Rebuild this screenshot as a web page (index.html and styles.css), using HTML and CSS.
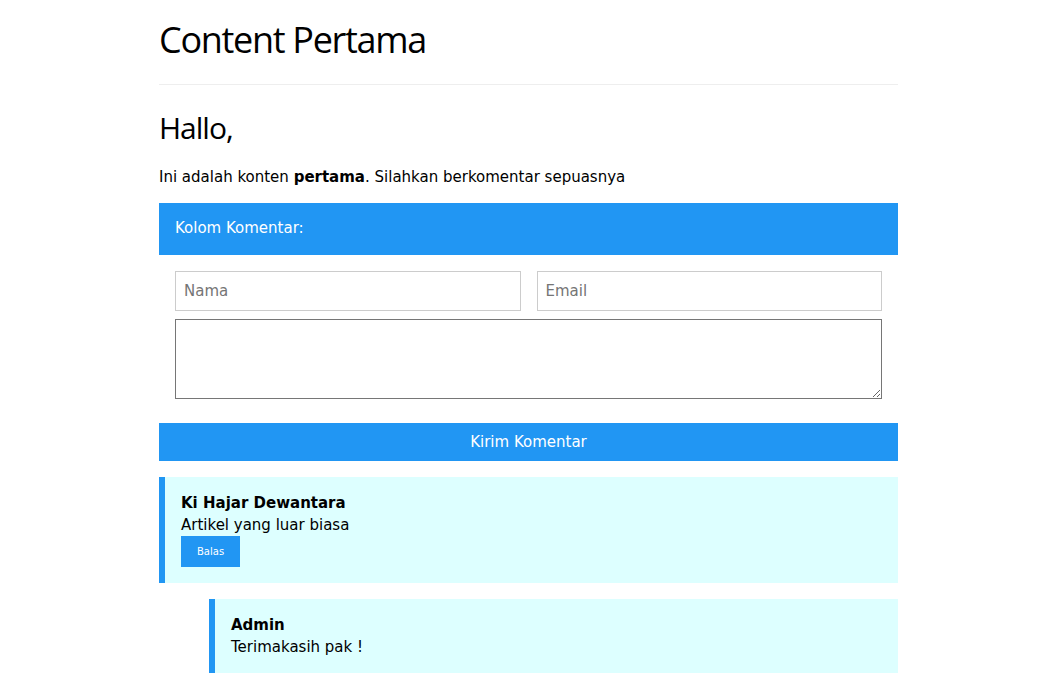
FILE: index.html
```html
<!DOCTYPE html>
<html>
<head>
<meta charset="utf-8">
<title>Content Pertama</title>
<link rel="stylesheet" href="styles.css">
</head>
<body>
<div class="page">
  <h1 class="title">Content Pertama</h1>
  <hr class="rule">
  <h2 class="greet">Hallo,</h2>
  <p class="intro">Ini adalah konten <b>pertama</b>. Silahkan berkomentar sepuasnya</p>

  <div class="form-head">Kolom Komentar:</div>
  <form class="form-body">
    <div class="row">
      <input class="field" type="text" placeholder="Nama">
      <input class="field" type="text" placeholder="Email">
    </div>
    <textarea class="area"></textarea>
  </form>
  <button class="send" type="button">Kirim Komentar</button>

  <div class="comment">
    <div class="c-name">Ki Hajar Dewantara</div>
    <div class="c-text">Artikel yang luar biasa</div>
    <button class="reply" type="button">Balas</button>
  </div>
  <div class="comment nested">
    <div class="c-name">Admin</div>
    <div class="c-text">Terimakasih pak !</div>
  </div>
</div>
</body>
</html>
```

FILE: styles.css
```css
html, body {
  margin: 0;
  padding: 0;
  background: #fff;
}
body {
  font-family: "DejaVu Sans", Verdana, sans-serif;
  font-size: 15px;
  line-height: 1.5;
  color: #000;
}
.page {
  width: 739px;
  margin: 0 auto;
}
.title {
  font-family: "Open Sans", "Noto Sans", sans-serif;
  font-weight: 400;
  font-size: 36px;
  letter-spacing: -1.3px;
  line-height: 1.2;
  margin: 0;
  padding-top: 18px;
}
.rule {
  border: 0;
  border-top: 1px solid #eee;
  margin: 23px 0 0;
}
.greet {
  font-family: "Open Sans", "Noto Sans", sans-serif;
  font-weight: 400;
  font-size: 30px;
  letter-spacing: -1px;
  line-height: 1.2;
  margin: 25px 0 0;
}
.intro {
  margin: 20px 0 14px;
}
.form-head {
  background: #2196F3;
  color: #fff;
  height: 52px;
  display: flex;
  align-items: center;
  padding: 0 16px;
}
.form-body {
  padding: 16px 16px 24px;
  margin: 0;
}
.row {
  display: flex;
  gap: 16px;
}
.field {
  flex: 1;
  min-width: 0;
  height: 40px;
  box-sizing: border-box;
  border: 1px solid #ccc;
  padding: 8px;
  font-family: "DejaVu Sans", Verdana, sans-serif;
  font-size: 15px;
  margin: 0;
}
.field::placeholder {
  color: #757575;
}
.area {
  display: block;
  width: 100%;
  box-sizing: border-box;
  height: 80px;
  margin: 8px 0 0;
  border: 1px solid #767676;
  font-family: "DejaVu Sans", Verdana, sans-serif;
  font-size: 15px;
}
.send {
  display: block;
  width: 100%;
  height: 38px;
  border: 0;
  background: #2196F3;
  color: #fff;
  font-family: "DejaVu Sans", Verdana, sans-serif;
  font-size: 15px;
  margin: 0 0 16px;
  padding: 0;
}
.comment {
  background: #ddffff;
  border-left: 6px solid #2196F3;
  padding: 15px 16px 16px;
  margin-bottom: 16px;
  line-height: 22px;
}
.comment.nested {
  margin-left: 50px;
  padding-bottom: 15px;
}
.c-name {
  font-weight: bold;
}
.reply {
  display: block;
  background: #2196F3;
  color: #fff;
  border: 0;
  font-family: "DejaVu Sans", Verdana, sans-serif;
  font-size: 10px;
  line-height: 15px;
  padding: 8px 16px;
  margin: 0;
}
```
